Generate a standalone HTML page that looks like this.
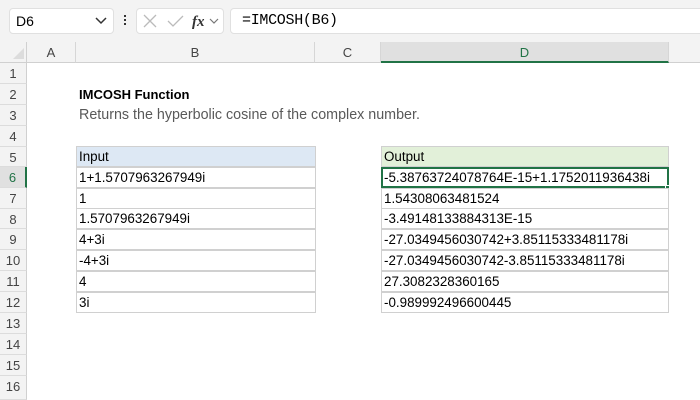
<!DOCTYPE html>
<html><head><meta charset="utf-8"><style>
*{margin:0;padding:0;box-sizing:border-box}
body{width:700px;height:400px;overflow:hidden;background:#fff;font-family:"Liberation Sans",sans-serif;position:relative}
.a{position:absolute}
.top{left:0;top:0;width:700px;height:42px;background:#f3f3f3}
.box{background:#fff;border:1px solid #e0e0e0;border-radius:4px}
.ch{top:42px;height:21px;background:#f3f3f3;border-right:1px solid #d6d6d6;border-bottom:1px solid #d0d0d0;color:#444;font-size:13px;text-align:center;line-height:21px}
.rh{left:0;width:27px;background:#f3f3f3;border-bottom:1px solid #dcdcdc;border-right:1px solid #d0d0d0;color:#444;font-size:13px;text-align:center;line-height:21px}
.c{height:21px;border:1px solid #d0d0d0;font-size:13.4px;line-height:20px;padding-left:2px;color:#000;white-space:nowrap}
</style></head><body>
<div class="a top"></div>
<div class="a box" style="left:9px;top:8px;width:105px;height:26px"></div>
<div class="a" style="left:16px;top:13px;font-size:14px">D6</div>
<svg class="a" style="left:95px;top:17px" width="12" height="8"><path d="M1 1L6 6L11 1" stroke="#333" stroke-width="1.5" fill="none"/></svg>
<div class="a" style="left:124px;top:15px;width:2px;height:2px;background:#333;box-shadow:0 4px #333,0 8px #333"></div>
<div class="a box" style="left:136px;top:8px;width:88px;height:26px"></div>
<svg class="a" style="left:142px;top:13px" width="80" height="16"><path d="M2 2L14 14M14 2L2 14" stroke="#bbb" stroke-width="1.3"/><path d="M26 8L31 13L41 3" stroke="#bbb" stroke-width="1.3" fill="none"/><text x="50" y="13" font-family="Liberation Serif" font-style="italic" font-weight="bold" font-size="15" fill="#333">fx</text><path d="M68 6L72 10L76 6" stroke="#777" stroke-width="1.2" fill="none"/></svg>
<div class="a box" style="left:230px;top:8px;width:480px;height:26px"></div>
<div class="a" style="left:242px;top:12px;font-size:15px;font-family:'Liberation Mono',monospace;letter-spacing:-0.3px">=IMCOSH(B6)</div>
<div class="a" style="left:0;top:42px;width:27px;height:21px;background:#f3f3f3;border-right:1px solid #d0d0d0;border-bottom:1px solid #d0d0d0"></div>
<svg class="a" style="left:13px;top:48px" width="12" height="12"><path d="M11 0L11 11L0 11Z" fill="#dcdcdc"/></svg>
<div class="a ch" style="left:27px;width:49px">A</div>
<div class="a ch" style="left:76px;width:239px">B</div>
<div class="a ch" style="left:315px;width:66px">C</div>
<div class="a ch" style="left:381px;width:288px;background:#e0e0e0;border-bottom:2px solid #217346;color:#217346">D</div>
<div class="a ch" style="left:669px;width:40px"></div>
<div class="a rh" style="top:63px;height:21px">1</div>
<div class="a rh" style="top:84px;height:21px">2</div>
<div class="a rh" style="top:105px;height:21px">3</div>
<div class="a rh" style="top:126px;height:21px">4</div>
<div class="a rh" style="top:147px;height:20px">5</div>
<div class="a rh" style="top:167px;height:21px;background:#e0e0e0;color:#217346;border-right:2px solid #217346">6</div>
<div class="a rh" style="top:188px;height:21px">7</div>
<div class="a rh" style="top:209px;height:20px">8</div>
<div class="a rh" style="top:229px;height:21px">9</div>
<div class="a rh" style="top:250px;height:21px">10</div>
<div class="a rh" style="top:271px;height:21px">11</div>
<div class="a rh" style="top:292px;height:21px">12</div>
<div class="a rh" style="top:313px;height:21px">13</div>
<div class="a rh" style="top:334px;height:21px">14</div>
<div class="a rh" style="top:355px;height:21px">15</div>
<div class="a rh" style="top:376px;height:24px">16</div>
<div class="a" style="left:79px;top:87px;font-size:13px;font-weight:bold">IMCOSH Function</div>
<div class="a" style="left:79px;top:107px;font-size:14.3px;color:#595959">Returns the hyperbolic cosine of the complex number.</div>
<div class="a c" style="left:76px;top:146px;width:240px;background:#dde8f4">Input</div>
<div class="a c" style="left:76px;top:167px;width:240px">1+1.5707963267949i</div>
<div class="a c" style="left:76px;top:188px;width:240px">1</div>
<div class="a c" style="left:76px;top:208px;width:240px">1.5707963267949i</div>
<div class="a c" style="left:76px;top:229px;width:240px">4+3i</div>
<div class="a c" style="left:76px;top:250px;width:240px">-4+3i</div>
<div class="a c" style="left:76px;top:271px;width:240px">4</div>
<div class="a c" style="left:76px;top:292px;width:240px">3i</div>
<div class="a c" style="left:381px;top:146px;width:288px;background:#e2f0d9">Output</div>
<div class="a c" style="left:381px;top:167px;width:288px;border:2px solid #217346;line-height:18px;padding-left:1px">-5.38763724078764E-15+1.1752011936438i</div>
<div class="a" style="left:665px;top:185px;width:5px;height:5px;background:#217346;border:1px solid #fff"></div>
<div class="a c" style="left:381px;top:188px;width:288px">1.54308063481524</div>
<div class="a c" style="left:381px;top:208px;width:288px">-3.49148133884313E-15</div>
<div class="a c" style="left:381px;top:229px;width:288px">-27.0349456030742+3.85115333481178i</div>
<div class="a c" style="left:381px;top:250px;width:288px">-27.0349456030742-3.85115333481178i</div>
<div class="a c" style="left:381px;top:271px;width:288px">27.3082328360165</div>
<div class="a c" style="left:381px;top:292px;width:288px">-0.989992496600445</div>
</body></html>
